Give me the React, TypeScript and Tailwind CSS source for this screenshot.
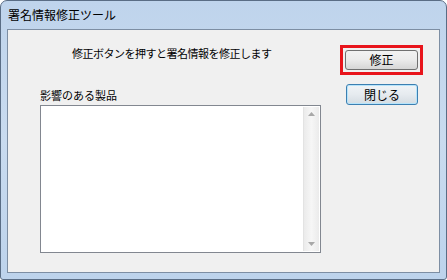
export default function App() {
  const font = { fontFamily: '"Noto Sans CJK JP", "Noto Sans", sans-serif' };
  return (
    <div
      style={font}
      className="w-[447px] h-[280px] flex flex-col rounded-t-[7px] rounded-b-[3px] border border-[#5a6d85] bg-gradient-to-b from-[#bfd4ec] via-[#c9dbef] to-[#bdd3ec] overflow-hidden"
    >
      <div className="h-[28px] flex items-center pl-[7px] text-[12px] text-black leading-none">
        署名情報修正ツール
      </div>
      <div className="mx-[6px] h-[244px] border border-[#7d8ea3] bg-[#f0f0f0] flex text-[11px] text-black leading-none">
        <div className="pl-[32px] pt-[16px] flex flex-col">
          <div className="pl-[32px] h-[14px] flex items-center tracking-[-0.5px]">修正ボタンを押すと署名情報を修正します</div>
          <div className="mt-[29px] h-[12px] flex items-center">影響のある製品</div>
          <div className="mt-[4px] w-[281px] h-[148px] border border-[#828790] bg-white flex justify-end p-[1px]">
            <div className="w-[16px] h-full bg-gradient-to-r from-[#ebebeb] via-[#f6f6f6] to-[#ebebeb] border-l border-[#e3e3e3] flex flex-col justify-between items-center py-[5px]">
              <svg width="7" height="4" viewBox="0 0 7 4"><path d="M3.5 0L7 4H0z" fill="#a8a8a8" /></svg>
              <svg width="7" height="4" viewBox="0 0 7 4"><path d="M0 0h7L3.5 4z" fill="#a8a8a8" /></svg>
            </div>
          </div>
        </div>
        <div className="ml-[19px] pt-[15px] flex flex-col">
          <div className="w-[83px] h-[30px] border-[3px] border-[#e8141b] p-[2px]">
            <div className="w-[73px] h-[20px] rounded-[3px] border border-[#707070] bg-gradient-to-b from-[#f2f2f2] via-[#ebebeb] to-[#d6d6d6] flex items-center justify-center text-[12px]">
              修正
            </div>
          </div>
          <div className="mt-[9px] ml-[6px] w-[72px] h-[21px] rounded-[3px] border border-[#3c7fb1] shadow-[inset_0_0_0_1px_#b6e4fb] bg-gradient-to-b from-[#f0f4f7] via-[#e6ebef] to-[#d4dce2] flex items-center justify-center text-[12px]">
            閉じる
          </div>
        </div>
      </div>
    </div>
  );
}
